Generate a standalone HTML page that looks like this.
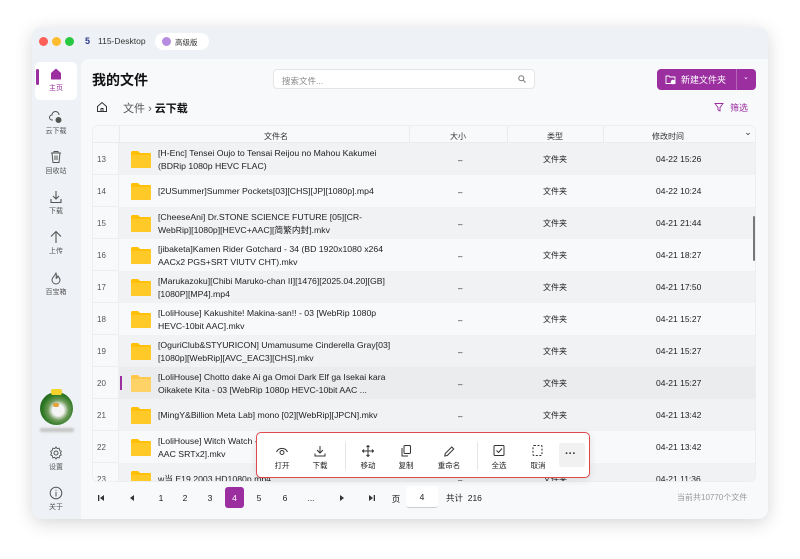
<!DOCTYPE html><html><head><meta charset="utf-8"><style>
*{box-sizing:border-box;margin:0;padding:0}
body{width:800px;height:559px;background:#fff;font-family:"Liberation Sans","Noto Sans CJK SC",sans-serif;position:relative;overflow:hidden;color:#222}
.win{position:absolute;left:32px;top:27px;width:736px;height:492px;background:#eef1f5;border-radius:10px;box-shadow:0 4px 18px rgba(0,0,0,.16)}
.abs{position:absolute}
.dot{position:absolute;top:37px;width:9px;height:9px;border-radius:50%}
.main{position:absolute;left:81px;top:59px;width:687px;height:460px;background:#f7f9fb;border-radius:8px 0 10px 0}
.side{position:absolute;left:34px;width:44px;text-align:center;font-size:7px;color:#555}
.side svg{display:block;margin:0 auto 2px}
.tbl{position:absolute;left:92px;top:125px;width:664px;height:357px;overflow:hidden;border-radius:6px;background:#f8f9fb;border:1px solid #eceef1}
.hdr{position:absolute;top:0;height:17px;left:0;width:664px;background:#f8f9fb;border-bottom:1px solid #e9ebee;font-size:8px;color:#333}
.hdr span{position:absolute;top:5px;transform:translateX(-50%)}
.row{position:absolute;left:0;width:664px;height:32px;font-size:8px}
.row .n{position:absolute;left:0;top:0;width:26px;height:32px;background:#f8f9fb;border-right:1px solid #eceef1;border-bottom:1px solid #eceef1;color:#555;padding:12px 0 0 4px}
.row .bg{position:absolute;left:26px;right:2px;top:0;height:32px}
.row .fold{position:absolute;left:38px;top:8px;width:20px;height:17px}
.row .nm{position:absolute;left:65px;top:4px;width:290px;line-height:12.5px;color:#222;font-size:8.7px;white-space:nowrap}
.row .sz{position:absolute;left:365px;top:13px}
.row .tp{position:absolute;left:450px;top:11px}
.row .tm{position:absolute;left:563px;top:11px;font-size:8.5px}
.pg{position:absolute;top:493px;font-size:8.5px;color:#222;transform:translateX(-50%)}
.tb{position:absolute;top:445px;text-align:center;font-size:7.5px;color:#222;transform:translateX(-50%)}
.tb svg{display:block;margin:0 auto 3px}
</style></head><body>
<div class="win"></div>
<div class="dot" style="left:39px;background:#fe5f57"></div>
<div class="dot" style="left:52px;background:#febc2e"></div>
<div class="dot" style="left:65px;background:#28c840"></div>
<div class="abs" style="left:85px;top:36px;font-size:9px;color:#2a3a8a;font-weight:bold">5</div>
<div class="abs" style="left:98px;top:36px;font-size:8.5px;color:#333">115-Desktop</div>
<div class="abs" style="left:155px;top:33px;width:54px;height:17px;background:#fff;border-radius:9px"></div>
<div class="abs" style="left:162px;top:37px;width:9px;height:9px;border-radius:50%;background:#b58ce0"></div>
<div class="abs" style="left:175px;top:37px;font-size:7.5px;color:#333">高级版</div>

<div class="abs" style="left:35px;top:62px;width:42px;height:38px;background:#fff;border-radius:5px"></div>
<div class="abs" style="left:36px;top:69px;width:3px;height:16px;background:#9b2fa0;border-radius:2px"></div>
<div class="side" style="top:67px;color:#9b2fa0"><svg width="14" height="14" viewBox="0 0 14 14"><path d="M2 6L7 1.5L12 6V12.5H2Z" fill="#9b2fa0"/></svg>主页</div>
<div class="side" style="top:110px"><svg width="14" height="14" viewBox="0 0 14 14" fill="none" stroke="#555" stroke-width="1"><path d="M4 10H3a2.5 2.5 0 0 1 0-5 3.5 3.5 0 0 1 7 0"/><circle cx="9.5" cy="10" r="2.5" fill="#555"/></svg>云下载</div>
<div class="side" style="top:150px"><svg width="14" height="14" viewBox="0 0 14 14" fill="none" stroke="#555" stroke-width="1"><path d="M2 3H12M5 3V1.5H9V3M3 3L4 12.5H10L11 3M6 5.5V10M8 5.5V10"/></svg>回收站</div>
<div class="side" style="top:190px"><svg width="14" height="14" viewBox="0 0 14 14" fill="none" stroke="#555" stroke-width="1.1"><path d="M7 1V9M4 6L7 9L10 6M2 9V12.5H12V9"/></svg>下载</div>
<div class="side" style="top:230px"><svg width="14" height="14" viewBox="0 0 14 14" fill="none" stroke="#555" stroke-width="1.1"><path d="M7 13V1.5M2 6.5L7 1.5L12 6.5"/></svg>上传</div>
<div class="side" style="top:271px"><svg width="14" height="14" viewBox="0 0 14 14" fill="none" stroke="#555" stroke-width="1"><path d="M7 1.5C7 4 3 6 3 9a4 4 0 0 0 8 0C11 7 9.5 6 9 5 8.5 7 7.5 7.5 7 7 8 5 7 3 7 1.5Z"/></svg>百宝箱</div>
<div class="abs" style="left:40px;top:392px;width:33px;height:33px;border-radius:50%;background:radial-gradient(circle at 55% 55%,#f4f4f4 22%,#6f9a5a 40%,#2e7a24 60%,#163d14 100%)"></div>
<div class="abs" style="left:51px;top:389px;width:11px;height:6px;background:#f3d22c;border-radius:2px"></div>
<div class="abs" style="left:53px;top:403px;width:6px;height:4px;background:#e6a23a;border-radius:2px"></div>
<div class="abs" style="left:40px;top:428px;width:34px;height:4px;background:#c4c4c4;border-radius:2px;filter:blur(1px)"></div>
<div class="side" style="top:446px"><svg width="14" height="14" viewBox="0 0 14 14" fill="none" stroke="#555" stroke-width="1"><circle cx="7" cy="7" r="2"/><path d="M7 1L8.3 2.8 10.5 2.3 10.9 4.5 12.8 5.6 11.8 7.6 12.8 9.6 10.9 10.6 10.5 12.8 8.3 12.3 7 14 5.7 12.3 3.5 12.8 3.1 10.6 1.2 9.6 2.2 7.6 1.2 5.6 3.1 4.5 3.5 2.3 5.7 2.8Z" transform="scale(.92) translate(.6 .1)"/></svg>设置</div>
<div class="side" style="top:486px"><svg width="14" height="14" viewBox="0 0 14 14" fill="none" stroke="#555" stroke-width="1"><circle cx="7" cy="7" r="5.8"/><path d="M7 6V10.5M7 3.8V4.8"/></svg>关于</div>

<div class="main"></div>
<div class="abs" style="left:92px;top:70px;font-size:14px;font-weight:bold;color:#111">我的文件</div>
<div class="abs" style="left:273px;top:69px;width:262px;height:20px;background:#fff;border:1px solid #e3e5e8;border-radius:4px;font-size:8.5px;color:#888;padding:5px 8px">搜索文件...</div>
<svg class="abs" style="left:518px;top:75px" width="8" height="8" viewBox="0 0 8 8" fill="none" stroke="#777"><circle cx="3.3" cy="3.3" r="2.5"/><path d="M5.2 5.2L7.5 7.5"/></svg>
<div class="abs" style="left:657px;top:69px;width:99px;height:21px;background:#9b2fa0;border-radius:4px"></div>
<div class="abs" style="left:736px;top:69px;width:1px;height:21px;background:#b865bb"></div>
<svg class="abs" style="left:665px;top:74px" width="11" height="11" viewBox="0 0 11 11" fill="none" stroke="#fff" stroke-width=".9"><path d="M1 2H4L5 3H10V9.5H1Z"/><circle cx="8" cy="8" r="1.8" fill="#fff"/></svg>
<div class="abs" style="left:681px;top:73px;font-size:9px;color:#fff">新建文件夹</div>
<div class="abs" style="left:743px;top:73px;font-size:7px;color:#fff">⌄</div>
<svg class="abs" style="left:96px;top:101px" width="12" height="12" viewBox="0 0 12 12" fill="none" stroke="#333" stroke-width="1"><path d="M1.5 5.5L6 1.5L10.5 5.5V10.5H1.5ZM5 10.5V7.5H7V10.5"/></svg>
<div class="abs" style="left:123px;top:100px;font-size:11px;color:#555">文件 <span style="color:#555">›</span> <span style="color:#111;font-weight:bold">云下载</span></div>
<svg class="abs" style="left:714px;top:102px" width="10" height="10" viewBox="0 0 10 10" fill="none" stroke="#9b2fa0" stroke-width=".9"><path d="M1 1.5H9L6 5.5V9L4 8V5.5Z"/></svg>
<div class="abs" style="left:730px;top:101px;font-size:9px;color:#9b2fa0">筛选</div>

<div class="tbl">
<div class="hdr"><span style="left:183px">文件名</span><span style="left:365px">大小</span><span style="left:462px">类型</span><span style="left:575px">修改时间</span><span style="left:655px;top:1px;font-size:9px">⌄</span>
<div class="abs" style="left:26px;top:0;width:1px;height:17px;background:#e9ebee"></div>
<div class="abs" style="left:316px;top:0;width:1px;height:17px;background:#e9ebee"></div>
<div class="abs" style="left:414px;top:0;width:1px;height:17px;background:#e9ebee"></div>
<div class="abs" style="left:510px;top:0;width:1px;height:17px;background:#e9ebee"></div>
</div>
<div id="rows"></div>
<div class="abs" style="left:660px;top:90px;width:2px;height:45px;background:#777;border-radius:1px"></div>
</div>
<script>
var d=[["13","[H-Enc] Tensei Oujo to Tensai Reijou no Mahou Kakumei<br>(BDRip 1080p HEVC FLAC)","04-22 15:26"],
["14","[2USummer]Summer Pockets[03][CHS][JP][1080p].mp4","04-22 10:24"],
["15","[CheeseAni] Dr.STONE SCIENCE FUTURE [05][CR-<br>WebRip][1080p][HEVC+AAC][简繁内封].mkv","04-21 21:44"],
["16","[jibaketa]Kamen Rider Gotchard - 34 (BD 1920x1080 x264<br>AACx2 PGS+SRT VIUTV CHT).mkv","04-21 18:27"],
["17","[Marukazoku][Chibi Maruko-chan II][1476][2025.04.20][GB]<br>[1080P][MP4].mp4","04-21 17:50"],
["18","[LoliHouse] Kakushite! Makina-san!! - 03 [WebRip 1080p<br>HEVC-10bit AAC].mkv","04-21 15:27"],
["19","[OguriClub&STYURICON] Umamusume Cinderella Gray[03]<br>[1080p][WebRip][AVC_EAC3][CHS].mkv","04-21 15:27"],
["20","[LoliHouse] Chotto dake Ai ga Omoi Dark Elf ga Isekai kara<br>Oikakete Kita - 03 [WebRip 1080p HEVC-10bit AAC ...","04-21 15:27"],
["21","[MingY&Billion Meta Lab] mono [02][WebRip][JPCN].mkv","04-21 13:42"],
["22","[LoliHouse] Witch Watch - 03 [WebRip 1080p HEVC-10bit<br>AAC SRTx2].mkv","04-21 13:42"],
["23","w当.E19.2003.HD1080p.mp4","04-21 11:36"]];
var h="";d.forEach(function(r,i){var t=17+i*32;var one=r[1].indexOf("<br>")<0;var bg=r[0]=="20"?"#ebecee":(i%2==0?"#f1f2f4":"#f8f9fb");
h+='<div class="row" style="top:'+t+'px"><div class="n">'+r[0]+'</div><div class="bg" style="background:'+bg+'"></div>'+(r[0]=="20"?'<div class="abs" style="left:27px;top:9px;width:2px;height:14px;background:#9b2fa0"></div>':'')+'<svg class="fold" viewBox="0 0 20 17"><path d="M0 1.5Q0 0 1.5 0H7L9 2H18.5Q20 2 20 3.5V15.5Q20 17 18.5 17H1.5Q0 17 0 15.5Z" fill="'+(r[0]=="20"?"#ffc84a":"#ffc107")+'"/><path d="M0 4H20V15.5Q20 17 18.5 17H1.5Q0 17 0 15.5Z" fill="'+(r[0]=="20"?"#ffd268":"#ffca28")+'"/></svg><div class="nm" style="'+(one?'top:10px':'')+'">'+r[1]+'</div><div class="sz">–</div><div class="tp">文件夹</div><div class="tm">'+r[2]+'</div></div>'});
document.getElementById("rows").innerHTML=h;
</script>

<div class="abs" style="left:256px;top:432px;width:334px;height:46px;background:#fff;border:1.5px solid #e0494b;border-radius:5px;box-shadow:0 2px 8px rgba(0,0,0,.1)"></div>
<div class="abs" style="left:345px;top:442px;width:1px;height:28px;background:#e6e6e6"></div>
<div class="abs" style="left:477px;top:442px;width:1px;height:28px;background:#e6e6e6"></div>
<div class="abs" style="left:559px;top:443px;width:26px;height:24px;background:#f1f1f2;border-radius:3px"></div>
<div class="abs" style="left:565px;top:448px;font-size:11px;font-weight:bold;color:#333">···</div>
<div class="tb" style="left:282px"><svg width="13" height="12" viewBox="0 0 13 12" fill="none" stroke="#333" stroke-width="1"><path d="M1 7a6 6 0 0 1 11 0"/><circle cx="6.5" cy="7.5" r="2"/></svg>打开</div>
<div class="tb" style="left:320px"><svg width="13" height="12" viewBox="0 0 13 12" fill="none" stroke="#333" stroke-width="1"><path d="M6.5 1V8M3.5 5L6.5 8L9.5 5M1.5 8.5V11H11.5V8.5"/></svg>下载</div>
<div class="tb" style="left:368px"><svg width="13" height="12" viewBox="0 0 13 12" fill="none" stroke="#333" stroke-width="1"><path d="M6.5 .5V11.5M1 6H12M5 2L6.5 .5 8 2M5 10L6.5 11.5 8 10M2.5 4.5L1 6 2.5 7.5M10.5 4.5L12 6 10.5 7.5"/></svg>移动</div>
<div class="tb" style="left:406px"><svg width="13" height="12" viewBox="0 0 13 12" fill="none" stroke="#333" stroke-width="1"><rect x="4.5" y=".5" width="6.5" height="8" rx="1"/><path d="M2.5 3V11H8.5"/></svg>复制</div>
<div class="tb" style="left:449px"><svg width="13" height="12" viewBox="0 0 13 12" fill="none" stroke="#333" stroke-width="1"><path d="M2 11L2.5 8.5 9 2 11 4 4.5 10.5Z"/></svg>重命名</div>
<div class="tb" style="left:499px"><svg width="13" height="12" viewBox="0 0 13 12" fill="none" stroke="#333" stroke-width="1"><rect x="1.5" y=".5" width="10" height="10" rx="1"/><path d="M4 5.5L6 7.5 9.5 3.5"/></svg>全选</div>
<div class="tb" style="left:538px"><svg width="13" height="12" viewBox="0 0 13 12" fill="none" stroke="#333" stroke-width="1" stroke-dasharray="2 1.5"><rect x="1.5" y=".5" width="9" height="10" rx="1"/></svg>取消</div>

<svg class="abs" style="left:97px;top:494px" width="8" height="8" viewBox="0 0 8 8"><rect x="1" y="1" width="1.3" height="6" fill="#333"/><path d="M7 1V7L3 4Z" fill="#333"/></svg>
<svg class="abs" style="left:128px;top:494px" width="8" height="8" viewBox="0 0 8 8"><path d="M6 1V7L2 4Z" fill="#333"/></svg>
<div class="pg" style="left:161px">1</div><div class="pg" style="left:185px">2</div><div class="pg" style="left:210px">3</div>
<div class="abs" style="left:225px;top:487px;width:19px;height:21px;background:#9b2fa0;border-radius:3px;color:#fff;font-size:8.5px;text-align:center;padding-top:6px">4</div>
<div class="pg" style="left:259px">5</div><div class="pg" style="left:285px">6</div><div class="pg" style="left:311px">...</div>
<svg class="abs" style="left:338px;top:494px" width="8" height="8" viewBox="0 0 8 8"><path d="M2 1V7L6 4Z" fill="#333"/></svg>
<svg class="abs" style="left:368px;top:494px" width="8" height="8" viewBox="0 0 8 8"><path d="M1 1V7L5 4Z" fill="#333"/><rect x="5.7" y="1" width="1.3" height="6" fill="#333"/></svg>
<div class="pg" style="left:396px">页</div>
<div class="abs" style="left:406px;top:486px;width:32px;height:22px;background:#fff;border-radius:3px;border-bottom:1px solid #ccc;font-size:8.5px;text-align:center;padding-top:6px">4</div>
<div class="abs" style="left:446px;top:492px;font-size:8.5px">共计&nbsp; 216</div>
<div class="abs" style="left:677px;top:492px;font-size:8px;color:#999">当前共10770个文件</div>
</body></html>
